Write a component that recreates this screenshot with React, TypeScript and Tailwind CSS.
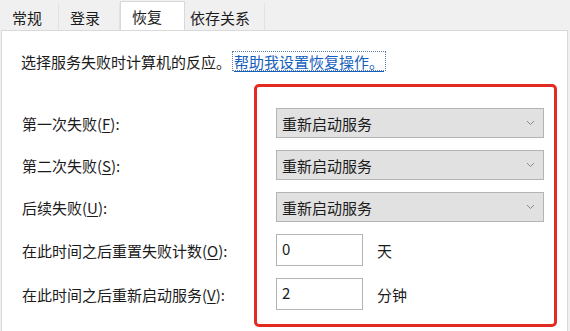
import React from 'react';

const font = 'font-["Segoe_UI","Noto_Sans_CJK_SC",sans-serif]';

const Chevron: React.FC = () => (
  <svg width="9" height="6" viewBox="0 0 9 6" className="mr-[8px]">
    <path d="M1 1 L4.5 4.5 L8 1" fill="none" stroke="#8a8a8a" strokeWidth="1" />
  </svg>
);

const Select: React.FC<{ value: string }> = ({ value }) => (
  <div className="h-[30px] w-[268px] flex items-center justify-between bg-[#e1e1e1] border border-[#b4b4b4] pl-[5px]">
    <span>{value}</span>
    <Chevron />
  </div>
);

const NumberBox: React.FC<{ value: string; unit: string }> = ({ value, unit }) => (
  <div className="flex items-center">
    <div className="h-[32px] w-[87px] bg-white border border-[#b4b4b4] pl-[5px] pb-[3px] flex items-center">
      {value}
    </div>
    <span className="ml-[14px]">{unit}</span>
  </div>
);

const App: React.FC = () => {
  const tabs = [
    { label: '常规', w: 'w-[59px] pl-[12px]' },
    { label: '登录', w: 'w-[61px] pl-[11px]' },
    { label: '恢复', w: 'w-[65px] pl-[11px]', active: true },
    { label: '依存关系', w: 'w-[80px] pl-[5px]' },
  ];

  const labels: { text: string; key: string; rest?: string; h: string }[] = [
    { text: '第一次失败(', key: 'F', h: 'h-[30px]' },
    { text: '第二次失败(', key: 'S', h: 'h-[30px]' },
    { text: '后续失败(', key: 'U', h: 'h-[30px]' },
    { text: '在此时间之后重置失败计数(', key: 'O', h: 'h-[32px]' },
    { text: '在此时间之后重新启动服务(', key: 'V', h: 'h-[32px]' },
  ];

  return (
    <div className={`w-[570px] h-[331px] bg-[#f0f0f0] text-[15px] text-[#1b1b1b] leading-none flex flex-col overflow-hidden ${font}`}>
      {/* Tab strip */}
      <div className="h-[31px] flex items-end">
        {tabs.map((t) => (
          <div
            key={t.label}
            className={`${t.w} flex items-center ${
              t.active ? 'h-[30px] bg-white border-x border-t border-[#d9d9d9]' : 'h-[28px] border-r border-[#e2e2e2]'
            }`}
          >
            {t.label}
          </div>
        ))}
      </div>

      {/* Page */}
      <div className="flex-1 ml-[1px] mr-[2px] bg-white border-x border-t border-[#d9d9d9] -mt-[1px]">
        <div className="flex items-center mt-[20px] pl-[19px] h-[20px]">
          <span>选择服务失败时计算机的反应。</span>
          <span className="ml-[1px] h-[20px] px-[1px] flex items-center border border-dotted border-[#5c7fa8] text-[#1560bd] underline underline-offset-[3px]">
            帮助我设置恢复操作。
          </span>
        </div>

        <div className="flex mt-[13px] pl-[20px]">
          <div className="w-[232px] pt-[24px] flex flex-col gap-y-[12px]">
            {labels.map((l) => (
              <div key={l.key} className={`${l.h} flex items-center`}>
                <span>
                  {l.text}
                  <u className="underline-offset-[2px]">{l.key}</u>):
                </span>
              </div>
            ))}
          </div>

          <div className="w-[303px] h-[243px] border-[3px] border-[#e42b22] rounded-[5px] pl-[19px] pt-[21px] flex flex-col gap-y-[12px]">
            <Select value="重新启动服务" />
            <Select value="重新启动服务" />
            <Select value="重新启动服务" />
            <NumberBox value="0" unit="天" />
            <NumberBox value="2" unit="分钟" />
          </div>
        </div>
      </div>
    </div>
  );
};

export default App;
